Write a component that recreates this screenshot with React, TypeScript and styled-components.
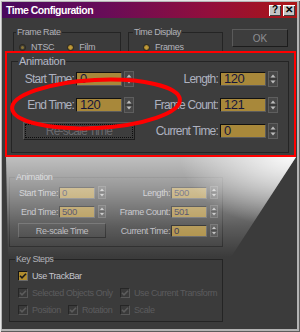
import React from "react";
import styled, { createGlobalStyle } from "styled-components";

const FONT = `"Liberation Sans", Arial, sans-serif`;

const GlobalStyle = createGlobalStyle`
  html, body { margin: 0; padding: 0; background: #3b3b3b; }
  body { font-family: ${FONT}; }
  *, *::before, *::after { box-sizing: border-box; }
`;

type Size = "sm" | "lg";
const S = {
  sm: { labelL: 48, labelR: 64, inW: 36, inH: 12, spW: 8, spH: 13, gLI: 1, gIS: 3, font: 9, ls: -0.4, vfont: 9.5, vls: -0.3, rowH: 13, rowGap: 6, btnW: 88, btnH: 15, btnML: 8, padTop: 3, legend: 9, legendLS: -0.4, legendLH: 12 },
  lg: { labelL: 62, labelR: 83, inW: 46, inH: 14, spW: 10, spH: 16, gLI: 2, gIS: 2, font: 12, ls: -0.8, vfont: 13, vls: -0.5, rowH: 16, rowGap: 10, btnW: 112, btnH: 18, btnML: 11, padTop: 3, legend: 11, legendLS: -0.3, legendLH: 14 },
};

const Window = styled.div`
  position: relative;
  width: 300px;
  height: 332px;
  overflow: hidden;
  padding: 2px 3px 3px 2px;
  background: #b4b4b4;
  box-shadow: inset 1px 1px 0 #e6e6e6, inset -1px -1px 0 #5c5c5c;
  display: flex;
  flex-direction: column;
`;

const TitleBar = styled.div`
  height: 16px;
  flex-shrink: 0;
  display: flex;
  align-items: center;
  padding: 0 2px;
  background: linear-gradient(to right, #4a0a5e 0%, #680c58 35%, #920f3c 70%, #ac1616 100%);
`;

const Title = styled.span`
  color: #fff;
  font-weight: bold;
  font-size: 10.5px;
  letter-spacing: -0.5px;
  line-height: 16px;
  padding-left: 2px;
`;

const TitleButtons = styled.div`
  margin-left: auto;
  display: flex;
  gap: 2px;
`;

const TitleButton = styled.div`
  width: 12px;
  height: 11px;
  background: #c4c4c4;
  box-shadow: inset 1px 1px 0 #fff, inset -1px -1px 0 #404040;
  display: flex;
  align-items: center;
  justify-content: center;
  font: bold 10px ${FONT};
  color: #000;
  line-height: 1;
`;

const Body = styled.div`
  flex: 1;
  background: #3b3b3b;
  padding-top: 8px;
  display: flex;
  flex-direction: column;
`;

const TopRow = styled.div`
  display: flex;
  align-items: flex-start;
  height: 70px;
  flex-shrink: 0;
`;

const Group = styled.fieldset<{ $w: number; $h: number; $ml: number; $mt?: number }>`
  margin: ${(p) => p.$mt ?? 0}px 0 0 ${(p) => p.$ml}px;
  width: ${(p) => p.$w}px;
  height: ${(p) => p.$h}px;
  padding: 0;
  min-width: 0;
  flex-shrink: 0;
  border: 1px solid #242424;
`;

const Legend = styled.legend<{ $ml: number; $s?: Size }>`
  margin-left: ${(p) => p.$ml}px;
  padding: 0 1px;
  font-size: ${(p) => S[p.$s ?? "sm"].legend}px;
  letter-spacing: ${(p) => S[p.$s ?? "sm"].legendLS}px;
  line-height: ${(p) => S[p.$s ?? "sm"].legendLH}px;
  color: ${(p) => (p.$s === "lg" ? "#b4b8c6" : "#b2b2b8")};
`;

const RadioRow = styled.div<{ $pl: number }>`
  display: flex;
  align-items: center;
  padding: 5px 0 0 ${(p) => p.$pl}px;
  font-size: 9px;
  letter-spacing: -0.3px;
  color: #b4b4bc;
  line-height: 8px;
`;

const Radio = styled.span<{ $on?: boolean; $gapBefore?: number }>`
  width: 7px;
  height: 7px;
  border-radius: 50%;
  margin-left: ${(p) => p.$gapBefore ?? 0}px;
  margin-right: 5px;
  background: ${(p) => (p.$on ? "#c29c3c" : "#8c7434")};
  border: 1px solid #1c1c1c;
  box-shadow: inset 0 0 0 1px ${(p) => (p.$on ? "#a8862e" : "#3a3a3a")};
  flex-shrink: 0;
`;

const OkButton = styled.div`
  margin: 3px 0 0 9px;
  width: 56px;
  height: 18px;
  display: flex;
  align-items: center;
  justify-content: center;
  font-size: 10px;
  color: #8e8e92;
  background: #3d3d3d;
  border: 1px solid;
  border-color: #5a5a5a #1c1c1c #1c1c1c #5a5a5a;
`;

const AnimGrid = styled.div<{ $s: Size }>`
  display: grid;
  grid-template-columns: auto auto;
  justify-content: start;
  grid-template-rows: repeat(3, ${(p) => S[p.$s].rowH}px);
  row-gap: ${(p) => S[p.$s].rowGap}px;
  padding-top: ${(p) => S[p.$s].padTop}px;
`;

const Field = styled.div`
  display: flex;
  align-items: center;
`;

const FieldLabel = styled.span<{ $s: Size; $w: number }>`
  width: ${(p) => p.$w}px;
  text-align: right;
  white-space: nowrap;
  font-size: ${(p) => S[p.$s].font}px;
  letter-spacing: ${(p) => S[p.$s].ls}px;
  color: ${(p) => (p.$s === "lg" ? "#aeb2c0" : "#b6b6bc")};
`;

const ValueBox = styled.div<{ $s: Size }>`
  width: ${(p) => S[p.$s].inW}px;
  height: ${(p) => S[p.$s].inH}px;
  margin-left: ${(p) => S[p.$s].gLI}px;
  padding-left: ${(p) => (p.$s === "lg" ? 3 : 2)}px;
  font-size: ${(p) => S[p.$s].vfont}px;
  letter-spacing: ${(p) => S[p.$s].vls}px;
  line-height: ${(p) => S[p.$s].inH - 2}px;
  color: #16163a;
  background: #a8883a;
  border: 1px solid;
  border-color: #111 #5c5c5c #5c5c5c #111;
  flex-shrink: 0;
`;

const SpinWrap = styled.div<{ $s: Size }>`
  margin-left: ${(p) => S[p.$s].gIS}px;
  display: flex;
  flex-shrink: 0;
`;

const ButtonCell = styled.div<{ $s: Size }>`
  display: flex;
  align-items: center;
  padding-left: ${(p) => S[p.$s].btnML}px;
`;

const RescaleButton = styled.div<{ $s: Size }>`
  width: ${(p) => S[p.$s].btnW}px;
  height: ${(p) => S[p.$s].btnH}px;
  flex-shrink: 0;
  display: flex;
  align-items: center;
  justify-content: center;
  font-size: ${(p) => S[p.$s].font}px;
  letter-spacing: ${(p) => S[p.$s].ls}px;
  color: ${(p) => (p.$s === "lg" ? "#6a6a6e" : "#b4b4b8")};
  background: #3d3d3d;
  border: 1px solid;
  border-color: #5a5a5a #1c1c1c #1c1c1c #5a5a5a;
  outline: ${(p) => (p.$s === "lg" ? "1px dotted #0c0c0c" : "none")};
  outline-offset: -3px;
`;

const KeyGrid = styled.div`
  display: grid;
  grid-template-columns: 50px 52px auto;
  grid-template-rows: repeat(3, 11px);
  row-gap: 6px;
  padding: 5px 0 0 8px;
`;

const CheckItem = styled.div<{ $span?: number; $off?: boolean }>`
  grid-column: span ${(p) => p.$span ?? 1};
  display: flex;
  align-items: center;
  gap: 4px;
  font-size: 9px;
  letter-spacing: -0.4px;
  white-space: nowrap;
  color: ${(p) => (p.$off ? "#5c5c5e" : "#c4c4cc")};
`;

const Box = styled.span<{ $off?: boolean }>`
  width: 10px;
  height: 10px;
  flex-shrink: 0;
  display: flex;
  background: ${(p) => (p.$off ? "#3a3a3a" : "#b08c2e")};
  border: 1px solid;
  border-color: ${(p) => (p.$off ? "#262626 #585858 #585858 #262626" : "#141414 #6a6a6a #6a6a6a #141414")};
`;

const Magnifier = styled.div`
  position: absolute;
  left: 5px;
  top: 51px;
  width: 291px;
  height: 106px;
  border: 2px solid #ff0000;
  background: #3d3d3d;
  padding: 1px 0 0 4px;
  display: flex;
  flex-direction: column;
`;

const Glow = styled.div`
  position: absolute;
  left: 0;
  top: 157px;
  width: 300px;
  height: 100px;
  pointer-events: none;
  clip-path: polygon(6px 0, 296px 0, 231px 100px, 8px 100px);
  background:
    radial-gradient(ellipse 110px 70px at 290px 0px, rgba(255, 255, 255, 0.9), rgba(255, 255, 255, 0)),
    linear-gradient(to bottom, rgba(255, 255, 255, 0.68) 0%, rgba(255, 255, 255, 0.48) 30%, rgba(255, 255, 255, 0.17) 70%, rgba(255, 255, 255, 0) 100%);
`;

const Annotation = styled.svg`
  position: absolute;
  left: 0;
  top: 0;
  pointer-events: none;
`;

function Spinner({ s }: { s: Size }) {
  const w = S[s].spW;
  const h = S[s].spH;
  const mid = h / 2;
  const cx = w / 2;
  const a = s === "lg" ? 2.5 : 2;
  const ah = s === "lg" ? 3 : 2.5;
  return (
    <SpinWrap $s={s}>
      <svg width={w} height={h} viewBox={`0 0 ${w} ${h}`}>
        <rect x={0.5} y={0.5} width={w - 1} height={h - 1} fill="#474747" stroke="#5e5e5e" />
        <line x1={1} x2={w - 1} y1={mid} y2={mid} stroke="#2e2e2e" />
        <polygon points={`${cx},${mid - 1.5 - ah} ${cx - a},${mid - 1.5} ${cx + a},${mid - 1.5}`} fill="#bcbcbc" />
        <polygon points={`${cx - a},${mid + 1.5} ${cx + a},${mid + 1.5} ${cx},${mid + 1.5 + ah}`} fill="#bcbcbc" />
      </svg>
    </SpinWrap>
  );
}

function NumField({ s, label, value, right }: { s: Size; label: string; value: string; right?: boolean }) {
  return (
    <Field>
      <FieldLabel $s={s} $w={right ? S[s].labelR : S[s].labelL}>{label}</FieldLabel>
      <ValueBox $s={s}>{value}</ValueBox>
      <Spinner s={s} />
    </Field>
  );
}

function AnimationFields({ s, v }: { s: Size; v: { start: string; end: string; len: string; count: string; cur: string } }) {
  return (
    <AnimGrid $s={s}>
      <NumField s={s} label="Start Time:" value={v.start} />
      <NumField s={s} label="Length:" value={v.len} right />
      <NumField s={s} label="End Time:" value={v.end} />
      <NumField s={s} label="Frame Count:" value={v.count} right />
      <ButtonCell $s={s}>
        <RescaleButton $s={s}>Re-scale Time</RescaleButton>
      </ButtonCell>
      <NumField s={s} label="Current Time:" value={v.cur} right />
    </AnimGrid>
  );
}

function Check({ label, off, span }: { label: string; off?: boolean; span?: number }) {
  return (
    <CheckItem $off={off} $span={span}>
      <Box $off={off}>
        <svg width={8} height={8} viewBox="0 0 8 8">
          <path d="M1 3.8 L3 5.8 L7 1.8" fill="none" stroke={off ? "#5c5c5c" : "#1a1a1a"} strokeWidth={1.6} />
        </svg>
      </Box>
      {label}
    </CheckItem>
  );
}

export default function App() {
  return (
    <>
      <GlobalStyle />
      <Window>
        <TitleBar>
          <Title>Time Configuration</Title>
          <TitleButtons>
            <TitleButton>?</TitleButton>
            <TitleButton>✕</TitleButton>
          </TitleButtons>
        </TitleBar>
        <Body>
          <TopRow>
            <Group $ml={11} $w={108} $h={70}>
              <Legend $ml={2}>Frame Rate</Legend>
              <RadioRow $pl={5}>
                <Radio />
                NTSC
                <Radio $on $gapBefore={13} />
                Film
              </RadioRow>
            </Group>
            <Group $ml={7} $w={95} $h={70}>
              <Legend $ml={4}>Time Display</Legend>
              <RadioRow $pl={14}>
                <Radio $on />
                Frames
              </RadioRow>
            </Group>
            <OkButton>OK</OkButton>
          </TopRow>
          <Group $ml={7} $mt={75} $w={214} $h={76}>
            <Legend $ml={5}>Animation</Legend>
            <AnimationFields s="sm" v={{ start: "0", end: "500", len: "500", count: "501", cur: "0" }} />
          </Group>
          <Group $ml={7} $mt={6} $w={214} $h={69}>
            <Legend $ml={5}>Key Steps</Legend>
            <KeyGrid>
              <Check label="Use TrackBar" span={3} />
              <Check label="Selected Objects Only" off span={2} />
              <Check label="Use Current Transform" off />
              <Check label="Position" off />
              <Check label="Rotation" off />
              <Check label="Scale" off />
            </KeyGrid>
          </Group>
        </Body>
        <Glow />
        <Magnifier>
          <Group $ml={0} $w={278} $h={99}>
            <Legend $ml={6} $s="lg">Animation</Legend>
            <AnimationFields s="lg" v={{ start: "0", end: "120", len: "120", count: "121", cur: "0" }} />
          </Group>
        </Magnifier>
        <Annotation width={300} height={332} viewBox="0 0 300 332">
          <ellipse cx={96} cy={104} rx={84} ry={24} transform="rotate(-3 96 104)" fill="none" stroke="#ff0000" strokeWidth={4} />
        </Annotation>
      </Window>
    </>
  );
}
